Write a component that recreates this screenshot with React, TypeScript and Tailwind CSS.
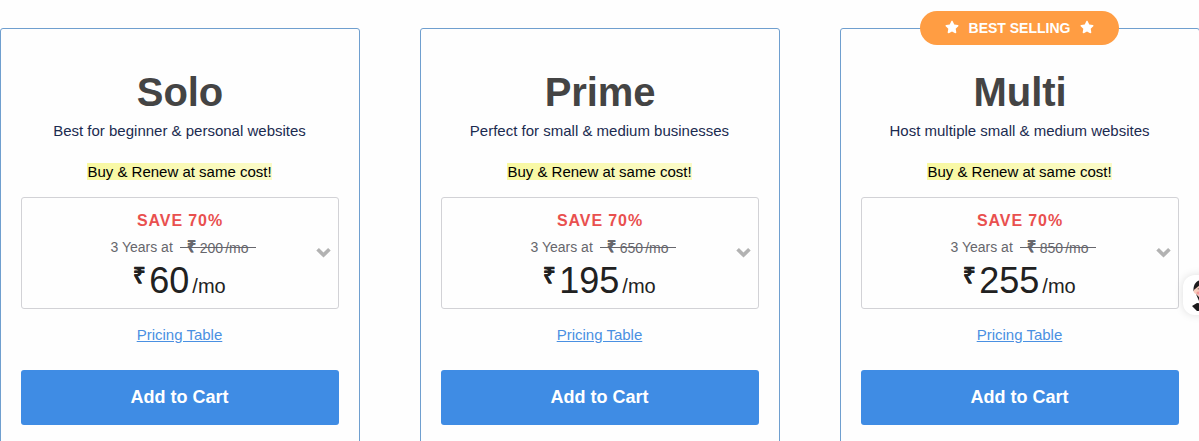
import React from 'react';
import { FaStar } from 'react-icons/fa';

interface Plan {
  name: string;
  tagline: string;
  oldPrice: number;
  price: number;
  bestSelling?: boolean;
}

const plans: Plan[] = [
  { name: 'Solo', tagline: 'Best for beginner & personal websites', oldPrice: 200, price: 60 },
  { name: 'Prime', tagline: 'Perfect for small & medium businesses', oldPrice: 650, price: 195 },
  { name: 'Multi', tagline: 'Host multiple small & medium websites', oldPrice: 850, price: 255, bestSelling: true },
];

const BestSellingBadge = () => (
  <div className="absolute -top-[18px] left-[79px] w-[199px] h-[34px] rounded-full bg-[#ff9d43] text-white text-sm font-bold flex items-center justify-center gap-[10px]">
    <FaStar className="size-[14px] -mt-[3px]" />
    <span>BEST SELLING</span>
    <FaStar className="size-[14px] -mt-[3px]" />
  </div>
);

const Chevron = () => (
  <svg className="absolute right-[7px] top-[49px] w-[15px] h-[11px]" viewBox="0 0 15 11">
    <path d="M1.600 2.200L7.500 8L13.400 2.200" fill="none" stroke="#b2b2b2" strokeWidth="3.700" />
  </svg>
);

const PlanCard: React.FC<{ plan: Plan }> = ({ plan }) => (
  <div className="relative w-[360px] h-[460px] shrink-0 border border-[#6f9fcf] rounded-[3px] px-5 flex flex-col items-center">
    {plan.bestSelling && <BestSellingBadge />}
    <h2 className="mt-[39px] text-[40px] leading-[48px] font-bold text-[#444444] tracking-[-0.1px]">{plan.name}</h2>
    <p className="mt-[5px] pr-px text-[15px] leading-[20px] text-[#1b2b50]">{plan.tagline}</p>
    <p className="mt-[22px] h-[18px] pr-px text-[15px] leading-[18px] text-black whitespace-nowrap">
      <span className="bg-linear-to-r from-[#f8f8a0] to-[#fbfbc8]">Buy &amp; Renew at same cost!</span>
    </p>

    <button className="relative mt-[16px] w-full h-[112px] shrink-0 border border-[#d2d2d6] rounded-[3px] flex flex-col items-center">
      <span className="mt-[13px] text-base leading-[20px] font-bold tracking-[0.9px] text-[#e9504f]">SAVE 70%</span>
      <span className="mt-[6px] pl-[7px] flex items-center text-sm leading-[20px] text-[#66666c]">
        <span className="-mt-px">3 Years at</span>
        <span className="relative ml-[7px] pl-[7px] pr-[8px] flex items-center">
          <span className="font-bold text-base leading-[20px] w-[13px] -mt-[2px] text-left [-webkit-text-stroke:0.2px_currentColor]">₹</span>
          <span className="mt-px">{plan.oldPrice}</span>
          <span className="ml-[2px] mt-px">/mo</span>
          <span className="absolute inset-x-0 top-[10px] h-px bg-[#66666c]" />
        </span>
      </span>
      <span className="flex items-start pr-px text-[#212121] h-[40px]">
        <span className="text-[22px] leading-[20px] font-bold w-[16px] mt-[8px] text-left [-webkit-text-stroke:0.2px_currentColor]">₹</span>
        <span className="mt-px text-[36px] leading-[44px] h-[40px]">{plan.price}</span>
        <span className="ml-[3px] mt-[16px] text-xl leading-[24px]">/mo</span>
      </span>
      <Chevron />
    </button>

    <a href="#" className="mt-[16px] pr-px text-[15px] leading-[20px] text-[#4a90e2] underline">Pricing Table</a>
    <button className="mt-[25px] w-full h-[55px] pb-[2px] pr-px shrink-0 rounded-[3px] bg-[#3f8ce4] text-white text-lg leading-none font-bold">
      Add to Cart
    </button>
  </div>
);

const ChatAvatar = () => (
  <div className="absolute left-[1183px] top-[275px] w-[40px] h-[40px] rounded-xl bg-white shadow-[0_0_8px_rgba(0,0,0,0.13)]">
    <svg className="absolute left-[9px] top-[4px]" width="28" height="32" viewBox="0 0 28 32">
      <path d="M1.500 12C1 5 5 1 10 1h8v12H4z" fill="#1c1a1c" />
      <path d="M3 10l5-4 12 0v13l-10 2-6-6c-3-1-3-4-1-5z" fill="#f8cdbd" />
      <path d="M4 15l4 4 3 1v5l-4-3z" fill="#1c1a1c" />
      <path d="M5 10l5-1v1.500z" fill="#1c1a1c" />
      <circle cx="6" cy="14" r="1.500" fill="#f29a9a" />
      <path d="M0 27l5-3 8 1 9 0v7H5z" fill="#1c1a1c" />
    </svg>
  </div>
);

export default function App() {
  return (
    <div className="relative w-full h-[441px] overflow-hidden bg-[#fefefe] font-['Liberation_Sans',Arial,sans-serif]">
      <div className="pt-[28px] flex gap-[60px]">
        {plans.map((plan) => (
          <PlanCard key={plan.name} plan={plan} />
        ))}
      </div>
      <ChatAvatar />
    </div>
  );
}
